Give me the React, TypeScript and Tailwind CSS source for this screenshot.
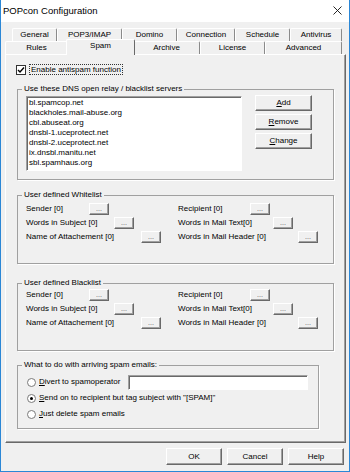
import React from "react";

const face = "font-['Liberation_Sans',Arial,sans-serif]";
const raised =
  "bg-[#f0f0f0] border border-t-white border-l-white border-r-[#696969] border-b-[#696969] shadow-[inset_-1px_-1px_0_#a0a0a0]";
const sunken =
  "bg-white border border-t-[#a0a0a0] border-l-[#a0a0a0] border-r-white border-b-white shadow-[inset_1px_1px_0_#696969]";

const backTabs = [
  { label: "General", w: "w-[45px]" },
  { label: "POP3/IMAP", w: "w-[65px]" },
  { label: "Domino", w: "w-[55px]" },
  { label: "Connection", w: "w-[58px]" },
  { label: "Schedule", w: "w-[55px]" },
  { label: "Antivirus", w: "w-[52px]" },
];

const frontTabs = [
  { label: "Rules", w: "w-[63px]" },
  { label: "Spam", w: "w-[69px]", active: true },
  { label: "Archive", w: "w-[67px]" },
  { label: "License", w: "w-[65px]" },
  { label: "Advanced", w: "w-[77px]" },
];

const servers = [
  "bl.spamcop.net",
  "blackholes.mail-abuse.org",
  "cbl.abuseat.org",
  "dnsbl-1.uceprotect.net",
  "dnsbl-2.uceprotect.net",
  "ix.dnsbl.manitu.net",
  "sbl.spamhaus.org",
];

// label widths place the "..." button where the original dialog has it
const listRows = [
  { label: "Sender [0]", w: "w-[63px]" },
  { label: "Recipient [0]", w: "w-[72px]" },
  { label: "Words in Subject [0]", w: "w-[88px]" },
  { label: "Words in Mail Text[0]", w: "w-[95px]" },
  { label: "Name of Attachement [0]", w: "w-[115px]" },
  { label: "Words in Mail Header [0]", w: "w-[120px]" },
];

function Group({ title, className, children }: { title: string; className: string; children: React.ReactNode }) {
  return (
    <fieldset className={`border border-[#a0a0a0] shadow-[1px_1px_0_#fff] ${className}`}>
      <legend className="ml-[4px] px-[2px] leading-[10px]">{title}</legend>
      {children}
    </fieldset>
  );
}

function Radio({ checked }: { checked?: boolean }) {
  return (
    <div className="w-[9px] h-[9px] rounded-full bg-white border border-[#7a7a7a] flex items-center justify-center shrink-0">
      {checked && <div className="w-[3px] h-[3px] rounded-full bg-black" />}
    </div>
  );
}

function UserList({ title, top, pb }: { title: string; top: string; pb: string }) {
  return (
    <Group title={title} className={`w-[317px] ${top}`}>
      <div className={`grid grid-cols-[152px_1fr] pl-[8px] ${pb}`}>
        {listRows.map((r) => (
          <div key={r.label} className="h-[14px] flex items-center">
            <span className={`${r.w} shrink-0 whitespace-nowrap`}>{r.label}</span>
            <button className={`${raised} w-[20px] h-[12px] flex items-end justify-center text-[7px] leading-[7px] text-[#555] pb-[2px]`}>...</button>
          </div>
        ))}
      </div>
    </Group>
  );
}

export default function App() {
  return (
    <div className={`${face} w-[350px] h-[472px] bg-[#f0f0f0] border-x border-b border-[#2b87d6] text-[8px] leading-[10px] text-black flex flex-col overflow-hidden`}>
      {/* title bar */}
      <div className="h-[22px] bg-white flex items-center justify-between pl-[2px] pr-[7px] shrink-0">
        <span className="text-[9.5px]">POPcon Configuration</span>
        <svg width="9" height="9" viewBox="0 0 9 9" className="mb-[1px]">
          <path d="M0.5 0.5 L8.5 8.5 M8.5 0.5 L0.5 8.5" stroke="#111" strokeWidth="0.9" />
        </svg>
      </div>

      {/* tabs */}
      <div className="mt-[6px] flex ml-[11px] h-[13px]">
        {backTabs.map((t) => (
          <div key={t.label} className={`${t.w} h-[13px] shrink-0 flex items-center justify-center border-t border-l border-r border-t-white border-l-white border-r-[#8a8a8a] rounded-t-[2px]`}>
            {t.label}
          </div>
        ))}
      </div>
      <div className="flex items-end ml-[4px] h-[13px]">
        {frontTabs.map((t) =>
          t.active ? (
            <div key={t.label} className={`${t.w} relative z-10 h-[16px] -mx-[2px] -mb-[1px] shrink-0 flex items-start justify-center pt-[1px] bg-[#f0f0f0] border-t border-l border-r border-t-white border-l-white border-r-[#696969] rounded-t-[2px]`}>
              {t.label}
            </div>
          ) : (
            <div key={t.label} className={`${t.w} h-[13px] shrink-0 flex items-center justify-center border-t border-l border-r border-t-white border-l-white border-r-[#8a8a8a] rounded-t-[2px]`}>
              {t.label}
            </div>
          )
        )}
      </div>

      {/* tab page */}
      <div className="ml-[4px] w-[341px] h-[389px] shrink-0 border border-t-white border-l-white border-r-[#696969] border-b-[#696969] shadow-[inset_-1px_-1px_0_#a0a0a0] pl-[11px] flex flex-col">
        <div className="mt-[9px] ml-[-1px] h-[11px] flex items-center">
          <div className="w-[10px] h-[10px] bg-white border border-[#333] flex items-center justify-center">
            <svg width="8" height="8" viewBox="0 0 8 8">
              <path d="M1 4 L3 6 L7 1.5" fill="none" stroke="#000" strokeWidth="1.4" />
            </svg>
          </div>
          <span className="ml-[3px] border border-dotted border-[#333] px-[1px] leading-[9px]">Enable antispam function</span>
        </div>

        <Group title="Use these DNS open relay / blacklist servers" className="mt-[9px] w-[317px]">
          <div className="flex pl-[8px] pt-[2px] pb-[8px]">
            <div className={`${sunken} w-[216px] h-[75px] pl-[2px] pt-[1px]`}>
              {servers.map((s) => (
                <div key={s} className="h-[10px] leading-[10px]">{s}</div>
              ))}
            </div>
            <div className="ml-[13px] mt-[-1px] flex flex-col gap-[3px]">
              <button className={`${raised} w-[57px] h-[16px] text-[8px]`}><span className="underline">A</span>dd</button>
              <button className={`${raised} w-[57px] h-[16px] text-[8px]`}><span className="underline">R</span>emove</button>
              <button className={`${raised} w-[57px] h-[16px] text-[8px]`}><span className="underline">C</span>hange</button>
            </div>
          </div>
        </Group>

        <UserList title="User defined Whitelist" top="mt-[10px]" pb="pt-[2px] pb-[19px]" />
        <UserList title="User defined Blacklist" top="mt-[14px]" pb="pt-[0px] pb-[20px]" />

        <Group title="What to do with arriving spam emails:" className="mt-[9px] w-[302px]">
          <div className="pl-[9px] pt-[4px] pb-[6px] flex flex-col">
            <div className="h-[16px] flex items-center">
              <Radio />
              <span className="ml-[3px] w-[89px] shrink-0"><span className="underline">D</span>ivert to spamoperator</span>
              <div className={`${sunken} w-[180px] h-[15px]`} />
            </div>
            <div className="h-[16px] flex items-center">
              <Radio checked />
              <span className="ml-[3px] whitespace-nowrap"><span className="underline">S</span>end on to recipient but tag subject with "[SPAM]"</span>
            </div>
            <div className="h-[16px] flex items-center">
              <Radio />
              <span className="ml-[3px]"><span className="underline">J</span>ust delete spam emails</span>
            </div>
          </div>
        </Group>
      </div>

      {/* dialog buttons */}
      <div className="mt-[5px] ml-[165px] flex gap-[5px]">
        <button className={`${raised} w-[56px] h-[17px] text-[8px]`}>OK</button>
        <button className={`${raised} w-[56px] h-[17px] text-[8px]`}>Cancel</button>
        <button className={`${raised} w-[56px] h-[17px] text-[8px]`}>Help</button>
      </div>
    </div>
  );
}
